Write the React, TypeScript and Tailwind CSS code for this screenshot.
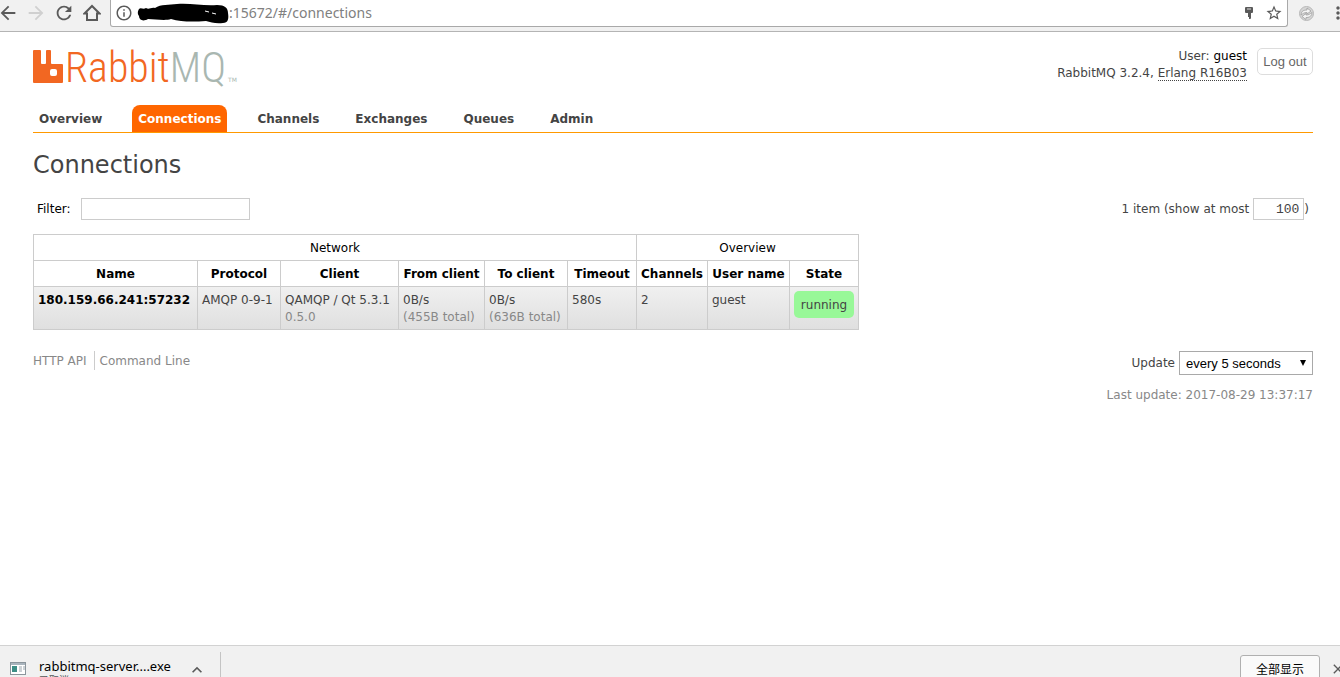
import {
  MdArrowBack,
  MdArrowForward,
  MdClose,
  MdInfoOutline,
  MdKeyboardArrowUp,
  MdMoreVert,
  MdRefresh,
  MdStarBorder,
} from "react-icons/md";

interface Tab {
  label: string;
  active?: boolean;
}

const tabs: Tab[] = [
  { label: "Overview" },
  { label: "Connections", active: true },
  { label: "Channels" },
  { label: "Exchanges" },
  { label: "Queues" },
  { label: "Admin" },
];

const columns = [
  { label: "Name", width: "w-[164px]" },
  { label: "Protocol", width: "w-[83px]" },
  { label: "Client", width: "w-[118px]" },
  { label: "From client", width: "w-[86px]" },
  { label: "To client", width: "w-[83px]" },
  { label: "Timeout", width: "w-[69px]" },
  { label: "Channels", width: "w-[71px]" },
  { label: "User name", width: "w-[82px]" },
  { label: "State", width: "w-[69px]" },
];

const connections = [
  {
    name: "180.159.66.241:57232",
    protocol: "AMQP 0-9-1",
    client: "QAMQP / Qt 5.3.1",
    clientVersion: "0.5.0",
    fromRate: "0B/s",
    fromTotal: "(455B total)",
    toRate: "0B/s",
    toTotal: "(636B total)",
    timeout: "580s",
    channels: 2,
    user: "guest",
    state: "running",
  },
];

function BrowserBar() {
  return (
    <header className="flex h-8 shrink-0 items-start border-b border-[#b4b4b4] bg-[#f1f1f1] text-[#5a5a5a]">
      <div className="flex h-[26px] items-center gap-2 pr-2">
        <button aria-label="Back" className="-ml-[3px] w-5">
          <MdArrowBack size={22} />
        </button>
        <button aria-label="Forward" className="w-5 text-[#d0d0d0]">
          <MdArrowForward size={22} />
        </button>
        <button aria-label="Reload" className="w-5">
          <MdRefresh size={22} />
        </button>
        <button aria-label="Home" className="w-5 pl-0.5">
          <svg
            width="18"
            height="18"
            viewBox="0 0 18 18"
            fill="none"
            stroke="currentColor"
            strokeWidth="2"
          >
            <path d="M1.5 9.5L9 2l7.500 7.500H14V16H4V9.500z" />
          </svg>
        </button>
      </div>
      <div className="ml-px flex h-[27px] flex-1 items-center rounded-b-[3px] border border-t-0 border-[#a9a9a9] bg-white pr-1 pl-1">
        <MdInfoOutline size={18} />
        <svg
          width="92"
          height="22"
          viewBox="0 0 92 22"
          className="ml-1 shrink-0"
          aria-hidden="true"
        >
          <path
            d="M2 7C4 5 6 8 9 6C12 8 14 5 18 6C24 2 32 3 40 2C54 1 66 4 80 3C88 3 91 6 91 11C92 17 91 21 86 21C78 22 74 20 69 19C56 20 44 20 34 17C28 19 18 17 11 17C6 20 2 18 2 14C0 11 1 9 2 7Z"
            fill="#000"
          />
          <path d="M68 9l4 1M75 11l4 1" stroke="#fff" strokeWidth="1" />
        </svg>
        <input
          aria-label="Address"
          defaultValue=":15672/#/connections"
          className="min-w-0 flex-1 bg-transparent font-['Noto_Sans',sans-serif] text-sm text-[#808080] outline-none"
        />
        <button aria-label="Saved passwords" className="mr-3">
          <svg width="8" height="12" viewBox="0 0 8 12">
            <path
              d="M1 0h6q1 0 1 1v4q0 1-1 1H6v5q0 1-1 1H4v-2H3V6H1Q0 6 0 5V1q0-1 1-1z"
              fill="#5a5a5a"
            />
            <path d="M2 2h4" stroke="#ddd" />
          </svg>
        </button>
        <button aria-label="Bookmark this page">
          <MdStarBorder size={18} />
        </button>
      </div>
      <div className="flex h-[26px] w-[52px] items-center justify-between overflow-hidden pl-2.5">
        <button aria-label="Extension" className="shrink-0">
          <svg width="17" height="17" viewBox="0 0 17 17" fill="none">
            <circle cx="8.500" cy="8.500" r="7" fill="#d6d6d6" stroke="#b8b8b8" />
            <path
              d="M3 10c0-3 2-5 5-5h1V3l4 3-4 3V7.500c-3 0-4 1-6 2.500zM14 7.500c0 3-2 5-5 5H8v2l-4-3 4-3V10c3 0 4-1 6-2.500z"
              fill="#f4f4f4"
              stroke="#a0a0a0"
              strokeWidth="0.8"
            />
          </svg>
        </button>
        <button aria-label="Menu" className="-mr-2 shrink-0">
          <MdMoreVert size={20} />
        </button>
      </div>
    </header>
  );
}

function Logo() {
  return (
    <a href="#/" aria-label="RabbitMQ" className="flex h-[33px] items-end">
      <svg width="30" height="33" viewBox="0 0 30 33" fill="#f26722">
        <path
          fillRule="evenodd"
          d="M1 0h6q1 0 1 1v12q0 1 1 1h3q1 0 1-1V1q0-1 1-1h3q1 0 1 1v12q0 1 1 1h10q1 0 1 1v17q0 1-1 1H1q-1 0-1-1V1q0-1 1-1zM19 19q-2 0-2 2v3q0 2 2 2h3q2 0 2-2v-3q0-2-2-2z"
        />
      </svg>
      <span className="ml-0.5 font-['Roboto_Condensed',Roboto,sans-serif] text-[42px] leading-[30px] font-light text-[#f26722]">
        Rabbit<span className="text-[#a9b7b1]">MQ</span>
      </span>
      <span className="ml-0.5 text-[6px] leading-[6px] text-[#a9b7b1]">TM</span>
    </a>
  );
}

function ConnectionsTable() {
  const cell = "border border-[#ccc] px-1 pt-[5px] pb-[3px] align-top";
  return (
    <table className="border-collapse text-left">
      <thead className="text-center text-black">
        <tr>
          <th colSpan={6} className={`${cell} font-normal`}>
            Network
          </th>
          <th colSpan={3} className={`${cell} font-normal`}>
            Overview
          </th>
        </tr>
        <tr>
          {columns.map((column) => (
            <th key={column.label} className={`${cell} ${column.width}`}>
              {column.label}
            </th>
          ))}
        </tr>
      </thead>
      <tbody>
        {connections.map((c) => (
          <tr key={c.name} className="bg-linear-to-b from-[#f0f0f0] to-[#dfdfdf]">
            <td className={cell}>
              <a href="#/connections" className="font-bold text-black">
                {c.name}
              </a>
            </td>
            <td className={cell}>{c.protocol}</td>
            <td className={cell}>
              {c.client}
              <div className="text-[#888]">{c.clientVersion}</div>
            </td>
            <td className={cell}>
              {c.fromRate}
              <div className="text-[#888]">{c.fromTotal}</div>
            </td>
            <td className={cell}>
              {c.toRate}
              <div className="text-[#888]">{c.toTotal}</div>
            </td>
            <td className={cell}>{c.timeout}</td>
            <td className={cell}>{c.channels}</td>
            <td className={cell}>{c.user}</td>
            <td className="border border-[#ccc] p-1 align-top">
              <div className="rounded-[5px] bg-[#98f898] pt-1.5 pb-1 text-center">
                {c.state}
              </div>
            </td>
          </tr>
        ))}
      </tbody>
    </table>
  );
}

function DownloadShelf() {
  return (
    <footer className="flex h-8 shrink-0 items-start overflow-hidden border-t border-[#d2d2d2] bg-[#f1f1f1] font-['Noto_Sans','Noto_Sans_CJK_SC',sans-serif] text-black">
      <div className="mt-1.5 flex h-10 items-start border-r border-[#c4c4c4] pr-[13px] pl-2.5">
        <svg width="16" height="14" viewBox="0 0 16 14" className="mt-2.5">
          <rect x="0.5" y="0.5" width="15" height="12" fill="#fff" stroke="#8b959c" />
          <path d="M1 2h14" stroke="#a9b4bd" strokeWidth="2" />
          <rect x="2" y="4" width="5" height="6" fill="#3e8e86" />
          <path d="M9 5h3M9 7h3M9 9h3M14 4v4" stroke="#9aa5ad" />
        </svg>
        <div className="ml-[13px]">
          <div className="mt-1.5 text-[13px] leading-4">rabbitmq-server....exe</div>
          <div className="text-[10px] leading-3 text-[#555]">已取消</div>
        </div>
        <button aria-label="Download options" className="mt-2 ml-4">
          <MdKeyboardArrowUp size={20} className="text-[#5a5a5a]" />
        </button>
      </div>
      <div className="mt-[9px] ml-auto flex items-start">
        <button className="h-7 w-20 rounded-[3px] border border-[#b0b0b0] bg-[#fafafa] pt-0.5 text-xs">
          全部显示
        </button>
        <button aria-label="Close" className="-mr-1.5 ml-2.5 mt-1.5 text-[#5a5a5a]">
          <MdClose size={16} />
        </button>
      </div>
    </footer>
  );
}

export default function App() {
  return (
    <div className="flex h-screen flex-col overflow-hidden bg-white font-['DejaVu_Sans',Verdana,sans-serif] text-xs leading-[17px] text-[#444]">
      <BrowserBar />
      <main className="min-h-0 flex-1 pr-[27px] pl-[33px]">
        <div className="flex items-start justify-between pt-4">
          <div className="pt-0.5">
            <Logo />
          </div>
          <div className="flex items-start gap-2.5">
            <div className="text-right">
              <div>
                User: <span className="text-black">guest</span>
              </div>
              <div>
                RabbitMQ 3.2.4,{" "}
                <abbr
                  title="Erlang version"
                  className="border-b border-dotted border-[#444] no-underline"
                >
                  Erlang R16B03
                </abbr>
              </div>
            </div>
            <button className="h-[27px] w-14 rounded-[5px] border border-[#ddd] font-['Liberation_Sans',Arial,sans-serif] text-[13px] text-[#666]">
              Log out
            </button>
          </div>
        </div>

        <nav className="mt-[22px] flex gap-6 border-b border-[#f90] font-bold">
          {tabs.map((tab) => (
            <a
              key={tab.label}
              href={`#/${tab.label.toLowerCase()}`}
              className={
                tab.active
                  ? "rounded-t-lg bg-[#f60] px-1.5 pt-1.5 pb-1 text-white"
                  : "px-1.5 pt-1.5 pb-1"
              }
            >
              {tab.label}
            </a>
          ))}
        </nav>

        <h1 className="mt-4 text-2xl">Connections</h1>

        <div className="mt-[17px] flex items-center justify-between">
          <div className="flex items-center pl-1 text-black">
            <label htmlFor="filter">Filter:</label>
            <input
              id="filter"
              type="text"
              className="ml-2.5 h-[22px] w-[169px] border border-[#ccc] px-1"
            />
          </div>
          <div className="flex items-center pr-1">
            <label htmlFor="limit">1 item (show at most</label>
            <input
              id="limit"
              type="text"
              defaultValue="100"
              className="ml-1 h-[22px] w-[51px] border border-[#ccc] px-1 text-right font-['Liberation_Mono',monospace] text-[13px]"
            />
            )
          </div>
        </div>

        <div className="mt-3.5">
          <ConnectionsTable />
        </div>

        <div className="mt-[21px] flex items-start justify-between text-[#888]">
          <div className="flex">
            <a href="#/api" className="border-r border-[#ccc] pt-0.5 pr-[7px]">
              HTTP API
            </a>
            <a href="#/cli" className="pt-0.5 pl-[5px]">
              Command Line
            </a>
          </div>
          <div className="text-right">
            <div className="flex items-center justify-end">
              <label htmlFor="update" className="text-[#444]">
                Update
              </label>
              <div className="relative ml-1">
                <select
                  id="update"
                  className="h-6 w-[134px] appearance-none border border-[#a9a9a9] bg-white pl-1.5 font-['Liberation_Sans',Arial,sans-serif] text-[13px] text-black"
                >
                  <option>every 5 seconds</option>
                </select>
                <svg
                  width="8"
                  height="8"
                  viewBox="0 0 8 8"
                  className="pointer-events-none absolute top-2 right-1.5"
                >
                  <path d="M1 1h6L4 7z" fill="#000" />
                </svg>
              </div>
            </div>
            <div className="mt-3">Last update: 2017-08-29 13:37:17</div>
          </div>
        </div>
      </main>
      <DownloadShelf />
    </div>
  );
}
